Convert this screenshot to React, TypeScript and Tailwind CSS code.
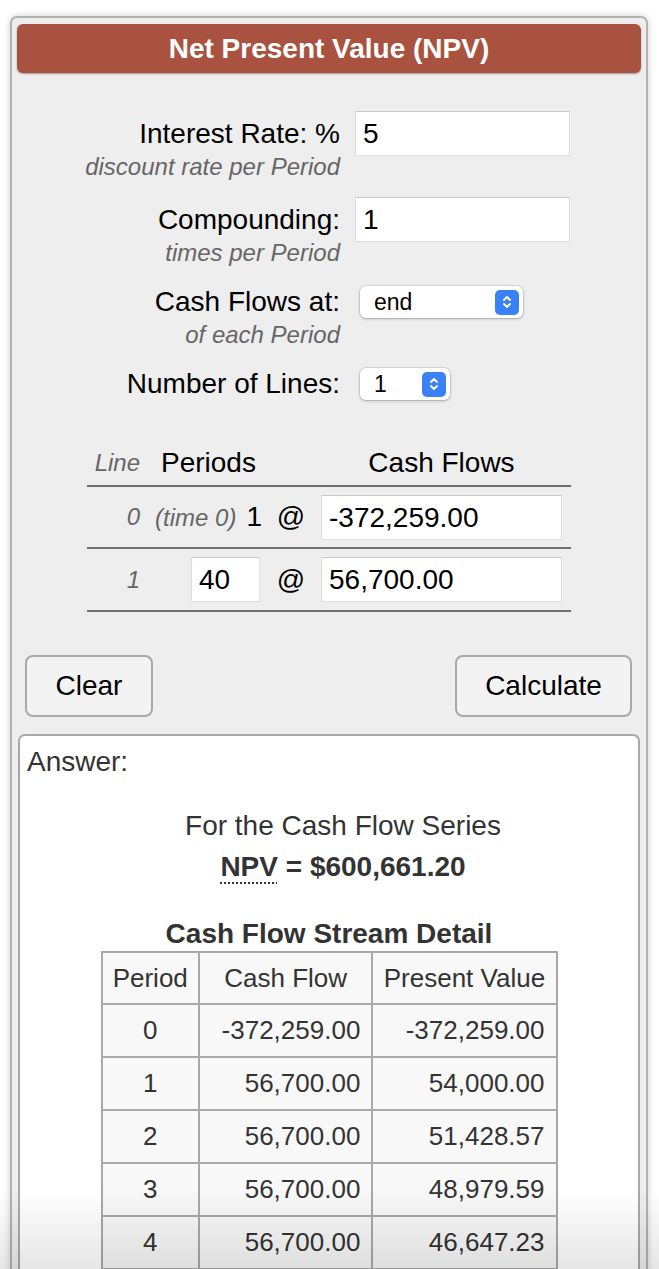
import React from 'react';

const rows = [
  ['0', '-372,259.00', '-372,259.00'],
  ['1', '56,700.00', '54,000.00'],
  ['2', '56,700.00', '51,428.57'],
  ['3', '56,700.00', '48,979.59'],
  ['4', '56,700.00', '46,647.23'],
  ['5', '56,700.00', '44,425.93'],
  ['6', '56,700.00', '42,310.41'],
];

function Chevrons() {
  return (
    <svg width="12" height="18" viewBox="0 0 12 18" fill="none">
      <path d="M3 7 L6 4 L9 7" stroke="white" strokeWidth="1.9" strokeLinecap="round" strokeLinejoin="round" />
      <path d="M3 11 L6 14 L9 11" stroke="white" strokeWidth="1.9" strokeLinecap="round" strokeLinejoin="round" />
    </svg>
  );
}

function SelectBox({ value, className }: { value: string; className: string }) {
  return (
    <div
      className={`flex h-[32px] items-center justify-between rounded-[6px] bg-white pl-[14px] pr-[4px] text-[23px] shadow-[0_0_0_1px_rgba(0,0,0,0.08),0_1px_3px_rgba(0,0,0,0.25)] ${className}`}
    >
      <span>{value}</span>
      <span className="flex h-[25px] w-[24px] items-center justify-center rounded-[5px] bg-[#3a80f6]">
        <Chevrons />
      </span>
    </div>
  );
}

function TextBox({ value, className }: { value: string; className: string }) {
  return (
    <div
      className={`h-[45px] border border-[#dedede] border-t-[#c9c9c9] bg-white pl-[7px] text-[28px] leading-[43px] ${className}`}
    >
      {value}
    </div>
  );
}

export default function App() {
  return (
    <div className="relative min-h-[1269px] bg-white pt-[16px] font-['Liberation_Sans',Arial,sans-serif] text-black">
      <div className="ml-[10px] w-[638px] rounded-t-[7px] border-2 border-b-0 border-[#b2b2b2] bg-[#eeeeee] px-[5px] pt-[6px] shadow-[0_0_6px_rgba(0,0,0,0.2)]">
        <div className="flex h-[49px] items-center justify-center rounded-[6px] bg-[#a9523f] text-[28px] font-bold text-white shadow-[0_1px_2px_rgba(0,0,0,0.35)]">
          Net Present Value (NPV)
        </div>

        {/* inputs */}
        <div className="mt-[38px] flex items-start">
          <div className="w-[323px] text-right">
            <div className="text-[28px] leading-[45px]">Interest Rate: %</div>
            <div className="text-[24px] italic leading-[22px] text-[#666]">discount rate per Period</div>
          </div>
          <TextBox value="5" className="ml-[15px] w-[215px]" />
        </div>

        <div className="mt-[19px] flex items-start">
          <div className="w-[323px] text-right">
            <div className="text-[28px] leading-[45px]">Compounding:</div>
            <div className="text-[24px] italic leading-[22px] text-[#666]">times per Period</div>
          </div>
          <TextBox value="1" className="ml-[15px] w-[215px]" />
        </div>

        <div className="mt-[16px] flex items-start">
          <div className="w-[323px] text-right">
            <div className="text-[28px] leading-[44px]">Cash Flows at:</div>
            <div className="text-[24px] italic leading-[22px] text-[#666]">of each Period</div>
          </div>
          <div className="ml-[20px] flex h-[44px] items-center">
            <SelectBox value="end" className="w-[163px]" />
          </div>
        </div>

        <div className="mt-[16px] flex items-start">
          <div className="w-[323px] text-right text-[28px] leading-[44px]">Number of Lines:</div>
          <div className="ml-[20px] flex h-[44px] items-center">
            <SelectBox value="1" className="w-[90px]" />
          </div>
        </div>

        {/* cash flow lines */}
        <div className="ml-[70px] mt-[34px] w-[484px]">
          <div className="grid h-[47px] grid-cols-[58px_122px_48px_256px] items-center border-b-2 border-[#6f6f6f] leading-[46px]">
            <div className="pr-[5px] text-right text-[24px] italic text-[#666]">Line</div>
            <div className="pl-[16px] text-[28px]">Periods</div>
            <div />
            <div className="pl-[6px] pr-[9px] text-center text-[28px]">Cash Flows</div>
          </div>
          <div className="grid h-[62px] grid-cols-[58px_122px_48px_256px] items-center border-b-2 border-[#6f6f6f]">
            <div className="pr-[5px] text-right text-[24px] italic text-[#666]">0</div>
            <div className="flex items-baseline justify-end pr-[5px]">
              <span className="text-[24px] italic text-[#666]">(time 0)</span>
              <span className="ml-[10px] text-[28px]">1</span>
            </div>
            <div className="text-center text-[28px]">@</div>
            <TextBox value="-372,259.00" className="ml-[6px] w-[241px]" />
          </div>
          <div className="grid h-[63px] grid-cols-[58px_122px_48px_256px] items-center border-b-2 border-[#6f6f6f]">
            <div className="pr-[5px] text-right text-[24px] italic text-[#666]">1</div>
            <div className="flex justify-end pr-[7px]">
              <TextBox value="40" className="w-[69px]" />
            </div>
            <div className="text-center text-[28px]">@</div>
            <TextBox value="56,700.00" className="ml-[6px] w-[241px]" />
          </div>
        </div>

        {/* buttons */}
        <div className="mt-[43px] flex justify-between pl-[8px] pr-[9px]">
          <button className="h-[62px] w-[128px] rounded-[8px] border-2 border-[#a9a9a9] bg-[#f3f3f3] text-[28px]">
            Clear
          </button>
          <button className="h-[62px] w-[177px] rounded-[8px] border-2 border-[#a9a9a9] bg-[#f3f3f3] text-[28px]">
            Calculate
          </button>
        </div>

        {/* answer */}
        <div className="mx-[1px] mt-[17px] rounded-t-[7px] border-2 border-b-0 border-[#a9a9a9] bg-white pb-[40px] pl-[7px] pt-[10px] text-[#333]">
          <div className="text-[28px] leading-[32px]">Answer:</div>
          <div className="mt-[28px] pl-[28px] pr-[7px] text-center text-[28px] leading-[40px]">
            <div>For the Cash Flow Series</div>
            <div className="mt-[1px] font-bold">
              <span className="underline decoration-dotted decoration-[1.5px] underline-offset-[6px]">NPV</span> = $600,661.20
            </div>
          </div>
          <div className="mt-[30px] pr-[7px] text-center text-[28px] font-bold leading-[34px]">Cash Flow Stream Detail</div>
          <div className="flex justify-center pr-[7px]">
            <table className="w-[457px] border-collapse text-[26px]">
              <thead>
                <tr className="h-[52px]">
                  <th className="w-[98px] border-2 border-[#a9a9a9] bg-[#f8f8f8] font-normal">Period</th>
                  <th className="w-[174px] border-2 border-[#a9a9a9] bg-[#f8f8f8] font-normal">Cash Flow</th>
                  <th className="w-[185px] border-2 border-[#a9a9a9] bg-[#f8f8f8] font-normal">Present Value</th>
                </tr>
              </thead>
              <tbody>
                {rows.map((r) => (
                  <tr key={r[0]} className="h-[53px]">
                    <td className="border-2 border-[#a9a9a9] bg-[#f8f8f8] text-center">{r[0]}</td>
                    <td className="border-2 border-[#a9a9a9] bg-[#f8f8f8] pr-[11px] text-right">{r[1]}</td>
                    <td className="border-2 border-[#a9a9a9] bg-[#f8f8f8] pr-[11px] text-right">{r[2]}</td>
                  </tr>
                ))}
              </tbody>
            </table>
          </div>
        </div>
      </div>

      {/* fade at the bottom edge */}
      <div className="pointer-events-none fixed bottom-0 left-0 h-[80px] w-full bg-linear-to-b from-transparent to-black/10" />
    </div>
  );
}
